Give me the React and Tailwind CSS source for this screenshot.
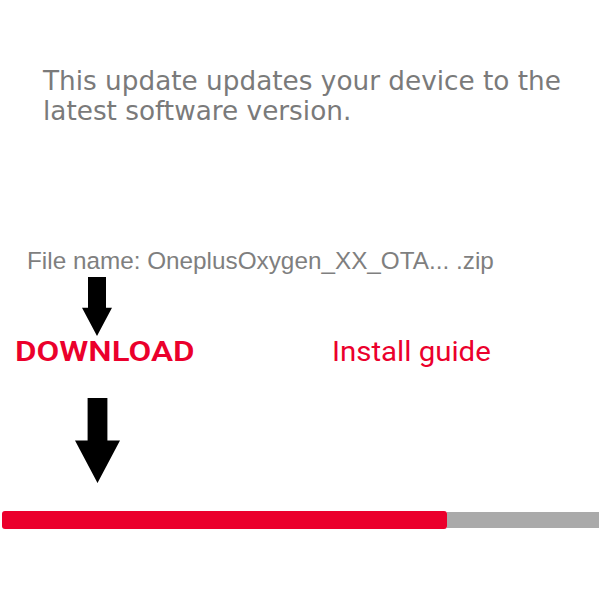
import React from 'react'

function DownArrow({ className, shaft, head }) {
    // simple black block arrow pointing down
    return (
        <svg className={className} viewBox="0 0 100 100" preserveAspectRatio="none">
            <polygon points={`${50 - shaft / 2},0 ${50 + shaft / 2},0 ${50 + shaft / 2},${head} 100,${head} 50,100 0,${head} ${50 - shaft / 2},${head}`} fill="#000" />
        </svg>
    )
}

export default function App() {
    return (
        <div className="w-[600px] h-[600px] bg-white relative overflow-hidden">
            {/* Description */}
            <p className="pt-[66px] pl-[43px] pr-6 text-[26.3px] leading-[30px] text-[#7a7a7a] font-['DejaVu_Sans',sans-serif]">
                This update updates your device to the latest software version.
            </p>

            {/* File name */}
            <p className="mt-[121px] pl-[27px] text-[24.3px] leading-[28px] text-[#7f7f7f] font-['Liberation_Sans',Arial,sans-serif]">
                File name: OneplusOxygen_XX_OTA... .zip
            </p>

            <div className="pl-[82px] mt-[2px]">
                <DownArrow className="w-[30px] h-[59px] block" shaft={60} head={52} />
            </div>

            <div className="flex items-center mt-0 h-[32px]">
                <div className="pl-[15px] w-[332px]">
                    <span className="inline-block origin-left scale-x-[1.18] text-[28px] font-semibold text-[#eb002c] font-['Roboto',sans-serif]">
                        DOWNLOAD
                    </span>
                </div>
                <span className="inline-block origin-left scale-x-[1.09] text-[27px] text-[#eb002c] font-['Roboto',sans-serif]">
                    Install guide
                </span>
            </div>

            <div className="pl-[75px] mt-[30px]">
                <DownArrow className="w-[45px] h-[85px] block" shaft={44} head={50} />
            </div>

            {/* Progress */}
            <div className="mt-[28px] flex items-center pl-[2px] pr-[1px]">
                <div className="h-[18px] w-[445px] bg-[#eb002c] rounded-[3px]" />
                <div className="h-[16px] flex-1 bg-[#aaaaaa]" />
            </div>
        </div>
    )
}
